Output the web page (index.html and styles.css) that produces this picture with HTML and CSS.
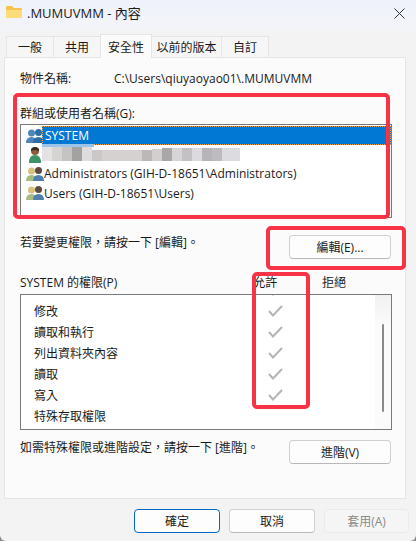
FILE: index.html
```html
<!DOCTYPE html>
<html lang="zh-Hant">
<head>
    <meta charset="UTF-8">
    <meta name="viewport" content="width=device-width, initial-scale=1.0">
    <title>.MUMUVMM - 內容</title>
    <link rel="stylesheet" href="styles.css">
</head>
<body>
<div class="window">
    <div class="titlebar">
        <svg class="folder-icon" width="16" height="14" viewBox="0 0 16 14">
            <path d="M0 2 Q0 1 1 1 H6 L8 3 H15 Q16 3 16 4 V12 Q16 13 15 13 H1 Q0 13 0 12 Z" fill="#f4c44e"/>
            <path d="M0 5 H16 V12 Q16 13 15 13 H1 Q0 13 0 12 Z" fill="#fbdc79"/>
        </svg>
        <span class="title">.MUMUVMM - 內容</span>
        <svg class="close-icon" width="11" height="11" viewBox="0 0 11 11">
            <path d="M.5 .5 L10.5 10.5 M10.5 .5 L.5 10.5" stroke="#333" stroke-width="1"/>
        </svg>
    </div>

    <div class="tabs">
        <div class="tab tab-small">一般</div>
        <div class="tab tab-small">共用</div>
        <div class="tab tab-active">安全性</div>
        <div class="tab tab-wide">以前的版本</div>
        <div class="tab tab-small">自訂</div>
    </div>

    <div class="panel">
        <div class="object-row">
            <span class="object-label">物件名稱:</span>
            <span>C:\Users\qiuyaoyao01\.MUMUVMM</span>
        </div>

        <div class="group-label">群組或使用者名稱(G):</div>
        <div class="list user-list">
            <div class="user-row">
                <svg class="user-icon" width="18" height="16" viewBox="0 0 18 16">
                    <circle cx="5.5" cy="5" r="3.5" fill="#4d86b8"/>
                    <path d="M0 15 Q0 9 5.5 9 Q11 9 11 15 Z" fill="#4d86b8"/>
                    <circle cx="12.5" cy="4.5" r="3.5" fill="#2f6ea5"/>
                    <path d="M7 15 Q7 9 12.5 9 Q18 9 18 15 Z" fill="#2f6ea5"/>
                </svg>
                <span class="user-name user-selected">SYSTEM</span>
            </div>
            <div class="user-row">
                <svg class="user-icon" width="18" height="18" viewBox="0 0 18 18">
                    <circle cx="9" cy="5" r="4" fill="#8a5a3c"/>
                    <path d="M5 3 Q9 -1 13 3 L13 5 Q9 3 5 5 Z" fill="#3a2a20"/>
                    <path d="M3 17 Q3 9 9 9 Q15 9 15 17 Z" fill="#3f9268"/>
                </svg>
                <svg class="blur-name" width="198" height="20" viewBox="0 0 198 20">
                    <rect x="0" y="0" width="52" height="3" fill="#9cc4e8"/>
                    <rect x="0" y="3" width="10" height="14" fill="#e4e2e2"/>
                    <rect x="10" y="3" width="10" height="14" fill="#d6d3d3"/>
                    <rect x="20" y="3" width="10" height="14" fill="#c6c3c3"/>
                    <rect x="30" y="3" width="10" height="14" fill="#a3a1a1"/>
                    <rect x="40" y="3" width="10" height="14" fill="#dedcdc"/>
                    <rect x="50" y="6" width="10" height="11" fill="#c9c7c7"/>
                    <rect x="60" y="6" width="40" height="11" fill="#d4d1d0"/>
                    <rect x="100" y="6" width="10" height="11" fill="#bbb8b7"/>
                    <rect x="110" y="5" width="10" height="12" fill="#d2d0cf"/>
                    <rect x="120" y="4" width="10" height="13" fill="#a9a7a7"/>
                    <rect x="130" y="4" width="10" height="13" fill="#d8d5d6"/>
                    <rect x="140" y="4" width="10" height="13" fill="#c4c1c4"/>
                    <rect x="150" y="4" width="10" height="13" fill="#dcdade"/>
                    <rect x="160" y="4" width="10" height="13" fill="#b6b4b9"/>
                    <rect x="170" y="4" width="10" height="13" fill="#bdbbc0"/>
                    <rect x="180" y="4" width="18" height="13" fill="#dcdbe0"/>
                </svg>
            </div>
            <div class="user-row">
                <svg class="user-icon" width="18" height="16" viewBox="0 0 18 16">
                    <circle cx="5.5" cy="5" r="3.5" fill="#d8c17c"/>
                    <path d="M0 15 Q0 9 5.5 9 Q11 9 11 15 Z" fill="#a7bb83"/>
                    <circle cx="12.5" cy="4.5" r="3.5" fill="#5b4a42"/>
                    <path d="M7 15 Q7 9 12.5 9 Q18 9 18 15 Z" fill="#4f7fac"/>
                </svg>
                <span class="user-name">Administrators (GIH-D-18651\Administrators)</span>
            </div>
            <div class="user-row">
                <svg class="user-icon" width="18" height="16" viewBox="0 0 18 16">
                    <circle cx="5.5" cy="5" r="3.5" fill="#d8c17c"/>
                    <path d="M0 15 Q0 9 5.5 9 Q11 9 11 15 Z" fill="#a7bb83"/>
                    <circle cx="12.5" cy="4.5" r="3.5" fill="#5b4a42"/>
                    <path d="M7 15 Q7 9 12.5 9 Q18 9 18 15 Z" fill="#4f7fac"/>
                </svg>
                <span class="user-name">Users (GIH-D-18651\Users)</span>
            </div>
        </div>

        <div class="action-row edit-row">
            <span class="action-text">若要變更權限，請按一下 [編輯]。</span>
            <button class="btn btn-side">編輯(E)...</button>
        </div>

        <div class="perm-header">
            <span class="perm-title">SYSTEM 的權限(P)</span>
            <span class="perm-col">允許</span>
            <span class="perm-col">拒絕</span>
        </div>
        <div class="list perm-list">
            <div class="perm-rows">
                <div class="perm-row perm-row-cut"><svg class="check" width="15" height="12" viewBox="0 0 15 12"><path d="M1 6 L5 10.5 L14 1" fill="none" stroke="#b4b4b4" stroke-width="2"/></svg></div>
                <div class="perm-row">修改<svg class="check" width="15" height="12" viewBox="0 0 15 12"><path d="M1 6 L5 10.5 L14 1" fill="none" stroke="#b4b4b4" stroke-width="2"/></svg></div>
                <div class="perm-row">讀取和執行<svg class="check" width="15" height="12" viewBox="0 0 15 12"><path d="M1 6 L5 10.5 L14 1" fill="none" stroke="#b4b4b4" stroke-width="2"/></svg></div>
                <div class="perm-row">列出資料夾內容<svg class="check" width="15" height="12" viewBox="0 0 15 12"><path d="M1 6 L5 10.5 L14 1" fill="none" stroke="#b4b4b4" stroke-width="2"/></svg></div>
                <div class="perm-row">讀取<svg class="check" width="15" height="12" viewBox="0 0 15 12"><path d="M1 6 L5 10.5 L14 1" fill="none" stroke="#b4b4b4" stroke-width="2"/></svg></div>
                <div class="perm-row">寫入<svg class="check" width="15" height="12" viewBox="0 0 15 12"><path d="M1 6 L5 10.5 L14 1" fill="none" stroke="#b4b4b4" stroke-width="2"/></svg></div>
                <div class="perm-row">特殊存取權限</div>
            </div>
            <div class="scrollbar"><div class="scroll-thumb"></div></div>
        </div>

        <div class="action-row advanced-row">
            <span class="action-text">如需特殊權限或進階設定，請按一下 [進階]。</span>
            <button class="btn btn-side">進階(V)</button>
        </div>
    </div>

    <div class="footer">
        <button class="btn btn-footer btn-default">確定</button>
        <button class="btn btn-footer">取消</button>
        <button class="btn btn-footer btn-disabled">套用(A)</button>
    </div>

    <!-- red marks drawn on top of the screenshot -->
    <div class="mark mark-users"></div>
    <div class="mark mark-edit"></div>
    <div class="mark mark-allow"></div>
</div>
</body>
</html>
```

FILE: styles.css
```css
body {
    margin: 0;
    background: #8a8a8a;
    font-family: "Open Sans", "Noto Sans CJK TC", sans-serif;
    font-size: 12px;
    color: #1a1a1a;
}

.window {
    position: relative;
    width: 416px;
    height: 541px;
    overflow: hidden;
    background: #f3f3f3;
    border-radius: 0 0 6px 6px;
}

.titlebar {
    display: flex;
    align-items: center;
    height: 22px;
    padding: 0 8px 0 6px;
    margin-bottom: 12px;
    background: linear-gradient(#eff2fa, #f2f4fa);
    box-shadow: 0 8px 8px #f2f4fa;
}

.folder-icon {
    margin-right: 5px;
    margin-top: 2px;
}

.title {
    font-size: 13px;
    margin-top: 2px;
}

.close-icon {
    margin-left: auto;
    margin-top: 4px;
    margin-right: 3px;
}

.tabs {
    position: relative;
    display: flex;
    align-items: flex-end;
    height: 23px;
    padding-left: 6px;
}

.tab {
    display: flex;
    align-items: center;
    justify-content: center;
    box-sizing: border-box;
    height: 21px;
    background: #f6f6f6;
    border: 1px solid #e5e5e5;
    border-bottom: none;
    margin-right: -1px;
    font-size: 12px;
}

.tab-small {
    width: 48px;
}

.tab-wide {
    width: 71px;
}

.tab-active {
    width: 52px;
    height: 24px;
    margin-bottom: -1px;
    background: #fbfbfb;
    z-index: 1;
}

.panel {
    box-sizing: border-box;
    width: 402px;
    height: 442px;
    margin-left: 4px;
    padding: 0 14px 0 15px;
    background: #fbfbfb;
    border: 1px solid #e5e5e5;
}

.object-row {
    display: flex;
    height: 16px;
    margin-top: 13px;
    line-height: 16px;
}

.object-label {
    width: 94px;
}

.group-label {
    height: 16px;
    margin-top: 19px;
    line-height: 16px;
}

.list {
    box-sizing: border-box;
    width: 372px;
    background: #fff;
    border: 1px solid #7a7a7a;
}

.user-list {
    height: 94px;
    margin-top: 2px;
    padding-top: 1px;
}

.user-row {
    display: flex;
    align-items: center;
    height: 19.2px;
    padding-left: 5px;
}

.user-icon {
    flex: none;
}

.user-name {
    flex: none;
    height: 19px;
    line-height: 20px;
}

.user-selected {
    box-sizing: border-box;
    width: 349px;
    margin-left: -2px;
    padding-left: 3px;
    background: #0078d4;
    color: #fff;
    outline: 1px dotted #e8a050;
    outline-offset: -1px;
}

.blur-name {
    flex: none;
    margin-top: -1px;
    margin-left: -2px;
}

.action-row {
    display: flex;
    justify-content: space-between;
    align-items: flex-start;
    height: 24px;
}

.action-text {
    padding-top: 1px;
    line-height: 16px;
}

.edit-row {
    margin-top: 16px;
}

.advanced-row {
    margin-top: 9px;
}

.btn {
    box-sizing: border-box;
    height: 24px;
    padding: 0;
    background: #fdfdfd;
    border: 1px solid #d0d0d0;
    border-bottom-color: #b8b8b8;
    border-radius: 4px;
    font-family: inherit;
    font-size: 12px;
    color: #1a1a1a;
}

.btn-side {
    width: 102px;
    margin-top: 1px;
}

.perm-header {
    display: flex;
    height: 16px;
    margin-top: 17px;
    line-height: 16px;
}

.perm-title {
    width: 247px;
}

.perm-col {
    width: 73px;
}

.perm-list {
    display: flex;
    height: 136px;
    margin-top: 3px;
}

.perm-rows {
    flex: 1;
    overflow: hidden;
    padding-left: 13px;
}

.perm-row {
    display: flex;
    align-items: center;
    position: relative;
    height: 21px;
}

.perm-row-cut {
    margin-top: -16px;
}

.check {
    position: absolute;
    left: 234px;
    top: 5px;
}

.scrollbar {
    width: 16px;
    background: linear-gradient(#f1f1f1, #fbfbfb 30px);
    padding-top: 29px;
}

.scroll-thumb {
    width: 2px;
    height: 88px;
    margin-left: 7px;
    background: #8a8a8a;
    border-radius: 1px;
}

.footer {
    display: flex;
    gap: 9px;
    margin-top: 10px;
    padding-left: 134px;
}

.btn-footer {
    width: 86px;
}

.btn-default {
    border: 1px solid #0067c0;
}

.btn-disabled {
    width: 85px;
    background: #f5f5f5;
    border-color: #ebebeb;
    color: #8a8a8a;
}

.mark {
    position: absolute;
    box-sizing: border-box;
    border: 4px solid #f73347;
    border-radius: 5px;
}

.mark-users {
    left: 13px;
    top: 93px;
    width: 377px;
    height: 126px;
}

.mark-edit {
    left: 266px;
    top: 226px;
    width: 140px;
    height: 44px;
}

.mark-allow {
    left: 252px;
    top: 272px;
    width: 58px;
    height: 137px;
}
```
